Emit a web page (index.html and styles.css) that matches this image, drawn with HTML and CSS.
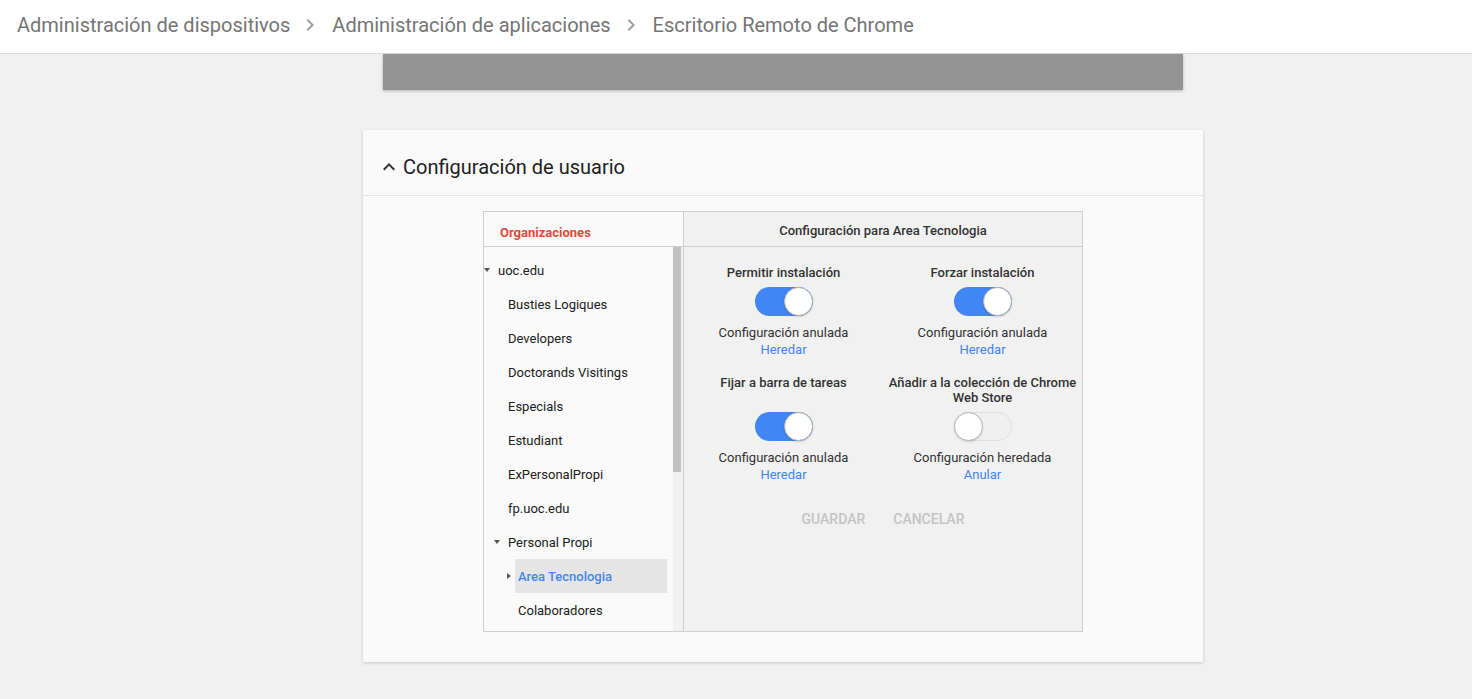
FILE: index.html
```html
<!DOCTYPE html>
<html lang="es">
<head>
<meta charset="utf-8">
<title>Escritorio Remoto de Chrome</title>
<link rel="stylesheet" href="styles.css">
</head>
<body>
<header class="topbar">
  <span class="crumb">Administración de dispositivos</span>
  <svg class="crumb-sep" viewBox="0 0 24 24" width="24" height="24"><path d="M10 6L8.59 7.41 13.17 12l-4.58 4.59L10 18l6-6z" fill="#9e9e9e"/></svg>
  <span class="crumb">Administración de aplicaciones</span>
  <svg class="crumb-sep" viewBox="0 0 24 24" width="24" height="24"><path d="M10 6L8.59 7.41 13.17 12l-4.58 4.59L10 18l6-6z" fill="#9e9e9e"/></svg>
  <span class="crumb">Escritorio Remoto de Chrome</span>
</header>

<main class="content">
  <div class="grey-bar"></div>

  <section class="card">
    <div class="card-head">
      <svg class="collapse" viewBox="0 0 24 24" width="24" height="24"><path d="M12 8l-6 6 1.41 1.41L12 10.83l4.59 4.58L18 14z" fill="#333"/></svg>
      <h2 class="card-title">Configuración de usuario</h2>
    </div>
    <div class="card-body">
      <div class="panel">
        <div class="org-col">
          <div class="org-head">Organizaciones</div>
          <div class="org-body">
            <ul class="tree">
              <li class="node l0"><span class="slot"><span class="tri-down"></span></span><span class="lbl">uoc.edu</span></li>
              <li class="node l1"><span class="slot"></span><span class="lbl">Busties Logiques</span></li>
              <li class="node l1"><span class="slot"></span><span class="lbl">Developers</span></li>
              <li class="node l1"><span class="slot"></span><span class="lbl">Doctorands Visitings</span></li>
              <li class="node l1"><span class="slot"></span><span class="lbl">Especials</span></li>
              <li class="node l1"><span class="slot"></span><span class="lbl">Estudiant</span></li>
              <li class="node l1"><span class="slot"></span><span class="lbl">ExPersonalPropi</span></li>
              <li class="node l1"><span class="slot"></span><span class="lbl">fp.uoc.edu</span></li>
              <li class="node l1"><span class="slot"><span class="tri-down"></span></span><span class="lbl">Personal Propi</span></li>
              <li class="node l2"><span class="slot"><span class="tri-right"></span></span><span class="lbl selected">Area Tecnologia</span></li>
              <li class="node l2"><span class="slot"></span><span class="lbl">Colaboradores</span></li>
            </ul>
            <div class="scroll-track"><div class="scroll-thumb"></div></div>
          </div>
        </div>
        <div class="cfg-col">
          <div class="cfg-head">Configuración para Area Tecnologia</div>
          <div class="cfg-body">
            <div class="settings">
              <div class="setting">
                <div class="s-label">Permitir instalación</div>
                <div class="toggle on"><span class="knob"></span></div>
                <div class="s-state">Configuración anulada</div>
                <a class="s-link">Heredar</a>
              </div>
              <div class="setting">
                <div class="s-label">Forzar instalación</div>
                <div class="toggle on"><span class="knob"></span></div>
                <div class="s-state">Configuración anulada</div>
                <a class="s-link">Heredar</a>
              </div>
              <div class="setting">
                <div class="s-label">Fijar a barra de tareas</div>
                <div class="toggle on"><span class="knob"></span></div>
                <div class="s-state">Configuración anulada</div>
                <a class="s-link">Heredar</a>
              </div>
              <div class="setting">
                <div class="s-label">Añadir a la colección de Chrome Web Store</div>
                <div class="toggle off"><span class="knob"></span></div>
                <div class="s-state">Configuración heredada</div>
                <a class="s-link">Anular</a>
              </div>
            </div>
            <div class="actions">
              <button class="btn">Guardar</button>
              <button class="btn">Cancelar</button>
            </div>
          </div>
        </div>
      </div>
    </div>
  </section>
</main>
</body>
</html>
```

FILE: styles.css
```css
* { box-sizing: border-box; }
html, body { margin: 0; padding: 0; }
body {
  background: #f1f1f1;
  font-family: Roboto, "Noto Sans", Arial, sans-serif;
  color: #212121;
  height: 699px;
  overflow: hidden;
}

.topbar {
  height: 54px;
  background: #fff;
  border-bottom: 1px solid #dcdcdc;
  display: flex;
  align-items: center;
  padding: 0 0 3px 17px;
}
.crumb {
  font-size: 20px;
  color: #757575;
  white-space: nowrap;
}
.crumb-sep {
  margin: 0 10px 0 8px;
  flex: none;
}

.content {
  margin-left: 363px;
  width: 840px;
}
.grey-bar {
  margin: 0 20px;
  height: 36px;
  background: #939393;
  box-shadow: 0 1px 3px rgba(0,0,0,0.25);
}

.card {
  margin-top: 40px;
  background: #fafafa;
  box-shadow: 0 1px 3px rgba(0,0,0,0.18);
}
.card-head {
  height: 66px;
  border-bottom: 1px solid #e4e4e4;
  display: flex;
  align-items: center;
  padding: 8px 0 0 14px;
}
.collapse { flex: none; }
.card-title {
  margin: 0 0 0 2px;
  font-size: 20px;
  font-weight: 400;
  color: #212121;
}
.card-body {
  padding: 15px 120px 30px;
}

.panel {
  display: flex;
  border: 1px solid #cfcfcf;
  height: 421px;
}
.org-col {
  width: 200px;
  border-right: 1px solid #cfcfcf;
  background: #fafafa;
  display: flex;
  flex-direction: column;
}
.org-head {
  height: 35px;
  border-bottom: 1px solid #cfcfcf;
  padding: 13px 0 0 16px;
  font-size: 13px;
  font-weight: 700;
  color: #dd4b39;
}
.org-body {
  flex: 1;
  display: flex;
  overflow: hidden;
}
.tree {
  list-style: none;
  margin: 0;
  padding: 6px 0 0 0;
  flex: 1;
}
.node {
  height: 34px;
  display: flex;
  align-items: stretch;
  font-size: 13px;
  color: #212121;
}
.node.l0 { padding-left: 0; }
.node.l1 { padding-left: 10px; }
.node.l2 { padding-left: 20px; }
.slot {
  width: 11px;
  flex: none;
  display: flex;
  align-items: center;
}
.tri-down {
  width: 0; height: 0;
  border-left: 3.5px solid transparent;
  border-right: 3.5px solid transparent;
  border-top: 4px solid #555;
}
.tri-right {
  width: 0; height: 0;
  margin-left: 3px;
  border-top: 3.5px solid transparent;
  border-bottom: 3.5px solid transparent;
  border-left: 4px solid #555;
}
.lbl {
  flex: 1;
  margin-right: 6px;
  padding-left: 3px;
  display: flex;
  align-items: center;
  white-space: nowrap;
}
.lbl.selected {
  background: #e5e5e5;
  color: #4285f4;
  font-weight: 500;
}
.scroll-track {
  width: 10px;
  flex: none;
  background: #f1f1f1;
}
.scroll-thumb {
  width: 8px;
  height: 225px;
  background: #c1c1c1;
}

.cfg-col {
  flex: 1;
  display: flex;
  flex-direction: column;
  background: #f1f1f1;
}
.cfg-head {
  height: 35px;
  border-bottom: 1px solid #cfcfcf;
  display: flex;
  align-items: center;
  justify-content: center;
  padding-top: 2px;
  font-size: 13px;
  font-weight: 500;
  color: #333;
}
.cfg-body {
  padding-top: 18px;
}
.settings {
  display: grid;
  grid-template-columns: 1fr 1fr;
  row-gap: 17px;
}
.setting {
  display: flex;
  flex-direction: column;
  align-items: center;
  padding: 0 5px;
  text-align: center;
}
.s-label {
  flex: 1;
  font-size: 13px;
  font-weight: 500;
  line-height: 15px;
  color: #333;
  margin-bottom: 7px;
}
.toggle {
  position: relative;
  width: 58px;
  height: 29px;
  border-radius: 15px;
  flex: none;
}
.toggle.on { background: #4285f4; }
.toggle.off { background: #f0f0f0; border: 1px solid #e0e0e0; }
.knob {
  position: absolute;
  top: 0;
  width: 29px;
  height: 29px;
  border-radius: 50%;
  background: #fff;
  border: 1px solid #b5b5b5;
  box-shadow: 0 1px 2px rgba(0,0,0,0.15);
}
.toggle.on .knob { right: 0; }
.toggle.off .knob { left: -1px; top: -1px; }
.s-state {
  margin-top: 8px;
  font-size: 13px;
  line-height: 17px;
  color: #333;
}
.s-link {
  font-size: 13px;
  line-height: 17px;
  color: #4285f4;
  cursor: pointer;
}
.actions {
  display: flex;
  justify-content: center;
  gap: 12px;
  margin-top: 18px;
}
.btn {
  height: 36px;
  padding: 0 8px;
  border: 0;
  background: transparent;
  font-family: Roboto, "Noto Sans", Arial, sans-serif;
  font-size: 14px;
  font-weight: 500;
  text-transform: uppercase;
  color: #c4c4c4;
}
```
